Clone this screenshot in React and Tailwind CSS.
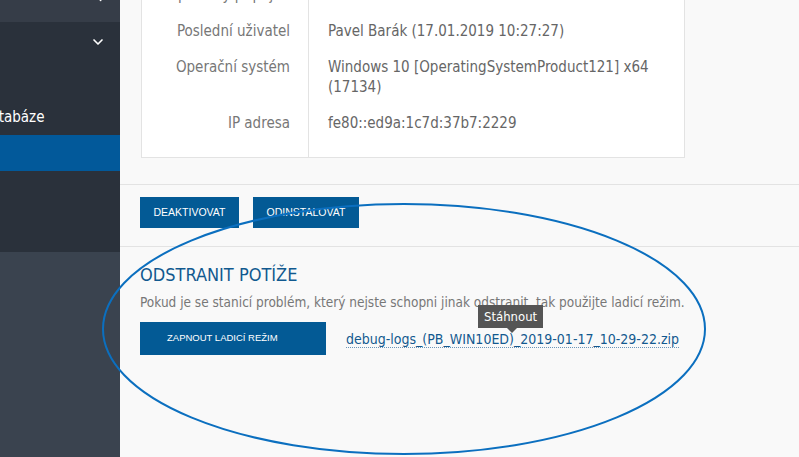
import React from "react";
import { ChevronDown, ChevronLeft } from "lucide-react";

const rows = [
    { label: "Naposledy připojen", value: "17.01.2019 10:29:22" },
    { label: "Poslední uživatel", value: "Pavel Barák (17.01.2019 10:27:27)" },
    { label: "Operační systém", value: "Windows 10 [OperatingSystemProduct121] x64 (17134)" },
    { label: "IP adresa", value: "fe80::ed9a:1c7d:37b7:2229" },
];

const Sidebar = () => (
    <div className="w-[120px] shrink-0 flex flex-col bg-[#3a434f]">
        <div className="h-[22px] bg-[#363d48] flex justify-end pr-[14px] overflow-hidden">
            <ChevronLeft className="text-white -mt-[10px]" size={14} strokeWidth={2.5} />
        </div>
        <div className="h-[230px] bg-[#2a313b] flex flex-col">
            <div className="h-[40px] flex items-center justify-end pr-[14px]">
                <ChevronDown className="text-white" size={16} strokeWidth={2.5} />
            </div>
            <div className="h-[73px] flex items-end pb-[8px] overflow-hidden">
                <span className="text-white text-[15px] leading-5 whitespace-nowrap -ml-[20px]">Databáze</span>
            </div>
            <div className="h-[36px] bg-[#02599a]" />
        </div>
    </div>
);

const Button = ({ children, className }) => (
    <button className={`bg-[#035a95] text-white uppercase font-['Liberation_Sans',sans-serif] ${className}`}>
        {children}
    </button>
);

const App = () => {
    return (
        <div className="w-[799px] h-[457px] flex overflow-hidden relative font-['DejaVu_Sans_Condensed','DejaVu_Sans',sans-serif]">
            <Sidebar />

            <div className="flex-1 bg-[#f9f9f9] flex flex-col">
                <div className="pl-[21px] pr-[114px]">
                    <div className="-mt-[23px] bg-white border border-t-0 border-[#e3e3e3] grid grid-cols-[167px_1fr] text-[15px] leading-5">
                        {rows.map((row, i) => {
                            const last = i === rows.length - 1;
                            return (
                                <React.Fragment key={row.label}>
                                    <div className={`border-r border-[#e3e3e3] text-right pr-[18px] pt-2 text-[#777] ${last ? "pb-6" : "pb-2"}`}>
                                        {row.label}
                                    </div>
                                    <div className={`pl-[19px] pr-4 pt-2 text-[#666] ${last ? "pb-6" : "pb-2"}`}>
                                        {row.value}
                                    </div>
                                </React.Fragment>
                            );
                        })}
                    </div>
                </div>

                <div className="mt-[26px] border-t border-[#e3e3e3] pl-[20px] pt-[12px] pb-[18px] flex gap-[14px]">
                    <Button className="w-[99px] h-[31px] text-[10.5px]">Deaktivovat</Button>
                    <Button className="w-[106px] h-[31px] text-[10.5px]">Odinstalovat</Button>
                </div>

                <div className="border-t border-[#e3e3e3] pl-[20px] pt-[16px]">
                    <h2 className="text-[#11598f] text-[18px] leading-6">ODSTRANIT POTÍŽE</h2>
                    <p className="text-[#777] text-[13.5px] leading-5 mt-[5px]">
                        Pokud je se stanicí problém, který nejste schopni jinak odstranit, tak použijte ladicí režim.
                    </p>
                    <div className="flex items-center mt-[10px]">
                        <Button className="w-[186px] h-[33px] text-[9.5px] text-left pl-[27px]">Zapnout ladicí režim</Button>
                        <div className="relative ml-[20px]">
                            <a className="text-[#13598f] text-[14px] leading-5 border-b border-dotted border-[#6b95b8]">
                                debug-logs_(PB_WIN10ED)_2019-01-17_10-29-22.zip
                            </a>
                            <div className="absolute left-[132px] -top-[22px] bg-[#555] text-white text-[13px] leading-[23px] px-[6px] whitespace-nowrap">
                                Stáhnout
                                <div className="absolute left-[29px] top-full w-0 h-0 border-x-[5px] border-x-transparent border-t-[5px] border-t-[#555]" />
                            </div>
                        </div>
                    </div>
                </div>
            </div>

            <svg className="absolute inset-0 pointer-events-none" width="799" height="457">
                <ellipse cx="404" cy="329" rx="301" ry="125" fill="none" stroke="#0b6fbf" strokeWidth="2" />
            </svg>
        </div>
    );
};

export default App;
